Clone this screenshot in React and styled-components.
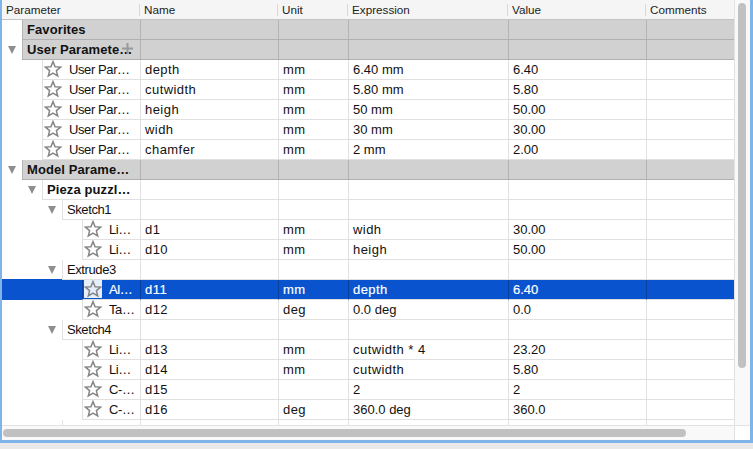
import React from "react";
import styled, { createGlobalStyle } from "styled-components";

const Global = createGlobalStyle`
  html, body { margin: 0; padding: 0; background: #e9e9e9; }
  body { font-family: "Liberation Sans", Arial, sans-serif; }
`;

const COLS = "140px 138px 70px 160px 138px 88px";
const BLUE = "#0a53cf";

const Page = styled.div`
  width: 753px;
  height: 449px;
  overflow: hidden;
  background: #e9e9e9;
`;
const Frame = styled.div`
  width: 748px;
  height: 440px;
  border: solid #7fb4ea;
  border-width: 0 3px 3px 2px;
  background: #fff;
  display: grid;
  grid-template-columns: 732px 16px;
  grid-template-rows: 425px 15px;
`;
const TableArea = styled.div`
  overflow: hidden;
  position: relative;
`;
const Header = styled.div`
  display: grid;
  grid-template-columns: ${COLS};
  height: 19px;
  background: #f5f5f5;
  border-bottom: 1px solid #c4c4c4;
  margin-left: -2px;
`;
const HeadCell = styled.div`
  font-size: 11.7px;
  line-height: 20px;
  color: #222;
  padding-left: ${p => (p.$first ? "6px" : "4px")};
  position: relative;
  &:not(:first-child)::before {
    content: "";
    position: absolute;
    left: -1px;
    top: 4px;
    height: 12px;
    width: 1px;
    background: #d8d8d8;
  }
`;
const Row = styled.div`
  display: grid;
  grid-template-columns: ${COLS};
  height: 20px;
  margin-left: -2px;
  background: ${p => (p.$selected ? BLUE : "transparent")};
  box-shadow: ${p => (p.$selected ? `0 -1px 0 ${BLUE}` : "none")};
  color: ${p => (p.$selected ? "#fff" : "#111")};
  font-size: 13px;
  line-height: 19px;
  -webkit-text-stroke: ${p => (p.$selected ? "0.2px #fff" : "0")};
`;
const TreeCell = styled.div`
  display: flex;
  align-items: stretch;
  min-width: 0;
`;
const Gutter = styled.div`
  width: ${p => p.$indent}px;
  flex: none;
  position: relative;
`;
const Arrow = styled.span`
  position: absolute;
  left: ${p => p.$indent - 14}px;
  top: 6px;
  width: 0;
  height: 0;
  border-left: 4.5px solid transparent;
  border-right: 4.5px solid transparent;
  border-top: 8px solid #8e8e8e;
`;
const TreeBody = styled.div`
  flex: 1;
  min-width: 0;
  display: flex;
  align-items: flex-start;
  white-space: nowrap;
  border-left: 1px solid ${p => (p.$selected ? "#0a3f9e" : p.$band ? "#b4b4b4" : "#e0e0e0")};
  border-bottom: 1px solid ${p => (p.$band ? "#b0b0b0" : "#e0e0e0")};
  background: ${p => (p.$band ? "#d1d1d1" : "transparent")};
  font-weight: ${p => (p.$bold ? 700 : 400)};
  letter-spacing: ${p => (p.$bold ? "0.1px" : "-0.4px")};
  padding-left: 4px;
`;
const Cell = styled.div`
  padding-left: 4px;
  white-space: nowrap;
  overflow: hidden;
  border-left: 1px solid ${p => (p.$selected ? "#0a3f9e" : p.$band ? "#b4b4b4" : "#e0e0e0")};
  border-bottom: 1px solid ${p => (p.$band ? "#b0b0b0" : "#e0e0e0")};
  background: ${p => (p.$band ? "#d1d1d1" : "transparent")};
  letter-spacing: ${p => (p.$wordy ? "0.45px" : "0")};
`;
const StarBox = styled.span`
  width: 18px;
  height: 18px;
  flex: none;
  display: flex;
  align-items: center;
  justify-content: center;
  margin-right: 7px;
  margin-left: -3px;
  background: ${p => (p.$selected ? "#e4effb" : "transparent")};
`;
const CursorPlus = styled.svg`
  position: absolute;
  left: 120px;
  top: 43px;
`;
const VTrack = styled.div`
  background: #f9f9f9;
  border-left: 1px solid #e2e2e2;
  padding: 3px 3px 0;
`;
const VThumb = styled.div`
  width: 8px;
  height: 365px;
  border-radius: 4px;
  background: #c1c1c1;
`;
const HTrack = styled.div`
  background: #f9f9f9;
  border-top: 1px solid #e2e2e2;
  padding: 3px 0 0 1px;
`;
const HThumb = styled.div`
  width: 683px;
  height: 8px;
  border-radius: 4px;
  background: #c1c1c1;
`;
const Corner = styled.div`
  background: #fff;
  border-top: 1px solid #e2e2e2;
  border-left: 1px solid #e2e2e2;
`;

const Star = () => (
  <svg width="18" height="18" viewBox="0 0 18 18">
    <path
      d="M9 1.6 L11.1 6.7 L16.6 7.1 L12.4 10.6 L13.7 16 L9 13.1 L4.3 16 L5.6 10.6 L1.4 7.1 L6.9 6.7 Z"
      fill="none"
      stroke="#868686"
      strokeWidth="1.5"
    />
  </svg>
);

const rows = [
  { label: "Favorites", indent: 22, band: true, bold: true },
  { label: "User Paramete…", indent: 22, band: true, bold: true, open: true },
  { label: "User Par…", indent: 42, star: true, c: ["depth", "mm", "6.40 mm", "6.40"] },
  { label: "User Par…", indent: 42, star: true, c: ["cutwidth", "mm", "5.80 mm", "5.80"] },
  { label: "User Par…", indent: 42, star: true, c: ["heigh", "mm", "50 mm", "50.00"] },
  { label: "User Par…", indent: 42, star: true, c: ["widh", "mm", "30 mm", "30.00"] },
  { label: "User Par…", indent: 42, star: true, c: ["chamfer", "mm", "2 mm", "2.00"] },
  { label: "Model Parame…", indent: 22, band: true, bold: true, open: true },
  { label: "Pieza puzzl…", indent: 42, bold: true, open: true },
  { label: "Sketch1", indent: 62, open: true },
  { label: "Li…", indent: 82, star: true, c: ["d1", "mm", "widh", "30.00"] },
  { label: "Li…", indent: 82, star: true, c: ["d10", "mm", "heigh", "50.00"] },
  { label: "Extrude3", indent: 62, open: true },
  { label: "Al…", indent: 82, star: true, selected: true, c: ["d11", "mm", "depth", "6.40"] },
  { label: "Ta…", indent: 82, star: true, c: ["d12", "deg", "0.0 deg", "0.0"] },
  { label: "Sketch4", indent: 62, open: true },
  { label: "Li…", indent: 82, star: true, c: ["d13", "mm", "cutwidth * 4", "23.20"] },
  { label: "Li…", indent: 82, star: true, c: ["d14", "mm", "cutwidth", "5.80"] },
  { label: "C-…", indent: 82, star: true, c: ["d15", "", "2", "2"] },
  { label: "C-…", indent: 82, star: true, c: ["d16", "deg", "360.0 deg", "360.0"] },
  { label: "Extrude4", indent: 62, open: true },
];

const heads = ["Parameter", "Name", "Unit", "Expression", "Value", "Comments"];
const isWordy = v => /^[a-z]/.test(v);

export default function App() {
  return (
    <Page>
      <Global />
      <Frame>
        <TableArea>
          <Header>
            {heads.map((h, i) => (
              <HeadCell key={h} $first={i === 0}>{h}</HeadCell>
            ))}
          </Header>
          {rows.map((r, i) => {
            const vals = r.c || ["", "", "", ""];
            return (
              <Row key={i} $selected={r.selected}>
                <TreeCell>
                  <Gutter $indent={r.indent}>{r.open && <Arrow $indent={r.indent} />}</Gutter>
                  <TreeBody $band={r.band} $bold={r.bold} $selected={r.selected}>
                    {r.star && (
                      <StarBox $selected={r.selected}>
                        <Star />
                      </StarBox>
                    )}
                    <span>{r.label}</span>
                  </TreeBody>
                </TreeCell>
                {[...vals, ""].map((v, j) => (
                  <Cell key={j} $band={r.band} $selected={r.selected} $wordy={isWordy(v)}>
                    {v}
                  </Cell>
                ))}
              </Row>
            );
          })}
          <CursorPlus width="11" height="11" viewBox="0 0 11 11">
            <path d="M4.5 0h2v4.5H11v2H6.5V11h-2V6.5H0v-2h4.5z" fill="#8f8f8f" fillOpacity="0.85" />
          </CursorPlus>
        </TableArea>
        <VTrack>
          <VThumb />
        </VTrack>
        <HTrack>
          <HThumb />
        </HTrack>
        <Corner />
      </Frame>
    </Page>
  );
}
